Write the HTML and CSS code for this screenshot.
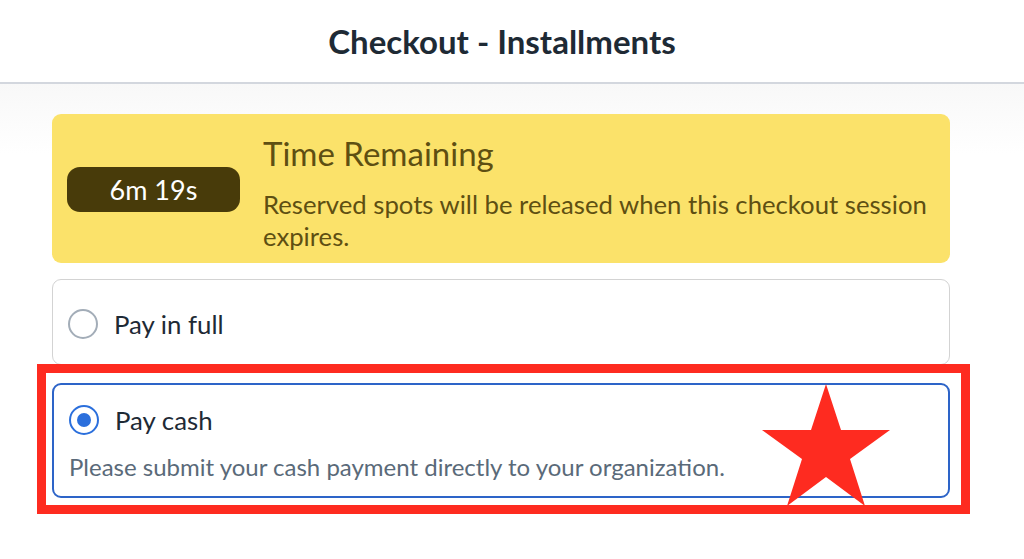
FILE: index.html
```html
<!DOCTYPE html>
<html lang="en">
<head>
  <meta charset="UTF-8">
  <title>Checkout - Installments</title>
  <meta name="viewport" content="width=device-width, initial-scale=1.0">
  <link rel="stylesheet" href="styles.css">
</head>
<body>

  <header class="topbar">
    <h1>Checkout - Installments</h1>
  </header>

  <main class="page">
    <div class="timer-box">
      <div class="timer-pill">6m 19s</div>
      <div class="timer-text">
        <h2>Time Remaining</h2>
        <p>Reserved spots will be released when this checkout session expires.</p>
      </div>
    </div>

    <label class="option">
      <span class="radio"></span>
      <span class="option-label">Pay in full</span>
    </label>

    <label class="option option-selected">
      <span class="option-row">
        <span class="radio radio-on"></span>
        <span class="option-label">Pay cash</span>
      </span>
      <span class="option-desc">Please submit your cash payment directly to your organization.</span>

      <!-- annotation overlay -->
      <span class="mark-frame"></span>
      <svg class="mark-star" width="128" height="122" viewBox="0 0 128 122">
        <polygon fill="#fe2b20" points="64,0 79,46 128,46 88,75 103,122 64,93 25,122 40,75 0,46 49,46"/>
      </svg>
    </label>
  </main>

</body>
</html>
```

FILE: styles.css
```css
body {
  margin: 0;
  font-family: Lato, "Open Sans", sans-serif;
  background: #fff;
  color: #1e2a35;
}

.topbar {
  height: 82px;
  border-bottom: 2px solid #d3d7de;
  display: flex;
  align-items: center;
  justify-content: center;
  background: #fff;
}

.topbar h1 {
  margin: 0;
  font-size: 33px;
  font-weight: 700;
  color: #1e2a35;
  padding-right: 20px;
}

.page {
  background: linear-gradient(#f8f8f8, #fff 70px);
  padding: 30px 74px 40px 52px;
  display: flex;
  flex-direction: column;
}

.timer-box {
  background: #fbe26a;
  border-radius: 9px;
  padding: 20px 15px 11px 15px;
  display: flex;
  align-items: center;
  gap: 23px;
  color: #5e4f12;
}

.timer-pill {
  flex: none;
  width: 173px;
  height: 45px;
  border-radius: 13px;
  background: #483b0a;
  color: #fff;
  font-size: 27px;
  display: flex;
  align-items: center;
  justify-content: center;
  margin-bottom: 7px;
}

.timer-text h2 {
  margin: 0 0 16px;
  font-size: 33px;
  font-weight: 400;
  line-height: 38px;
}

.timer-text p {
  margin: 0;
  font-size: 25.7px;
  line-height: 32px;
}

.option {
  margin-top: 16px;
  background: #fff;
  border: 1px solid #d3d3d3;
  border-radius: 9px;
  height: 86px;
  box-sizing: border-box;
  padding: 4px 15px 0;
  display: flex;
  align-items: center;
  gap: 16px;
}

.option-label {
  font-size: 25.8px;
  color: #1e2a35;
}

.radio {
  flex: none;
  width: 30px;
  height: 30px;
  box-sizing: border-box;
  border-radius: 50%;
  border: 2px solid #a3adb8;
  background: #fff;
}

.radio-on {
  border-color: #2b6fdc;
  position: relative;
}

.radio-on::after {
  content: "";
  position: absolute;
  left: 6px;
  top: 6px;
  width: 14px;
  height: 14px;
  border-radius: 50%;
  background: #2b6fdc;
}

.option-selected {
  position: relative;
  margin-top: 18px;
  height: 115px;
  border: 2px solid #2d64c8;
  padding: 19px 15px 0 15px;
  flex-direction: column;
  align-items: flex-start;
  justify-content: flex-start;
  gap: 17px;
}

.option-row {
  display: flex;
  align-items: center;
  gap: 16px;
  height: 31px;
}

.option-desc {
  font-size: 24px;
  line-height: 29px;
  color: #5a6a79;
}

.mark-frame {
  position: absolute;
  left: -17px;
  top: -21px;
  width: 915px;
  height: 132px;
  border: 9px solid #fe2b20;
}

.mark-star {
  position: absolute;
  left: 708px;
  top: -1px;
}
```
